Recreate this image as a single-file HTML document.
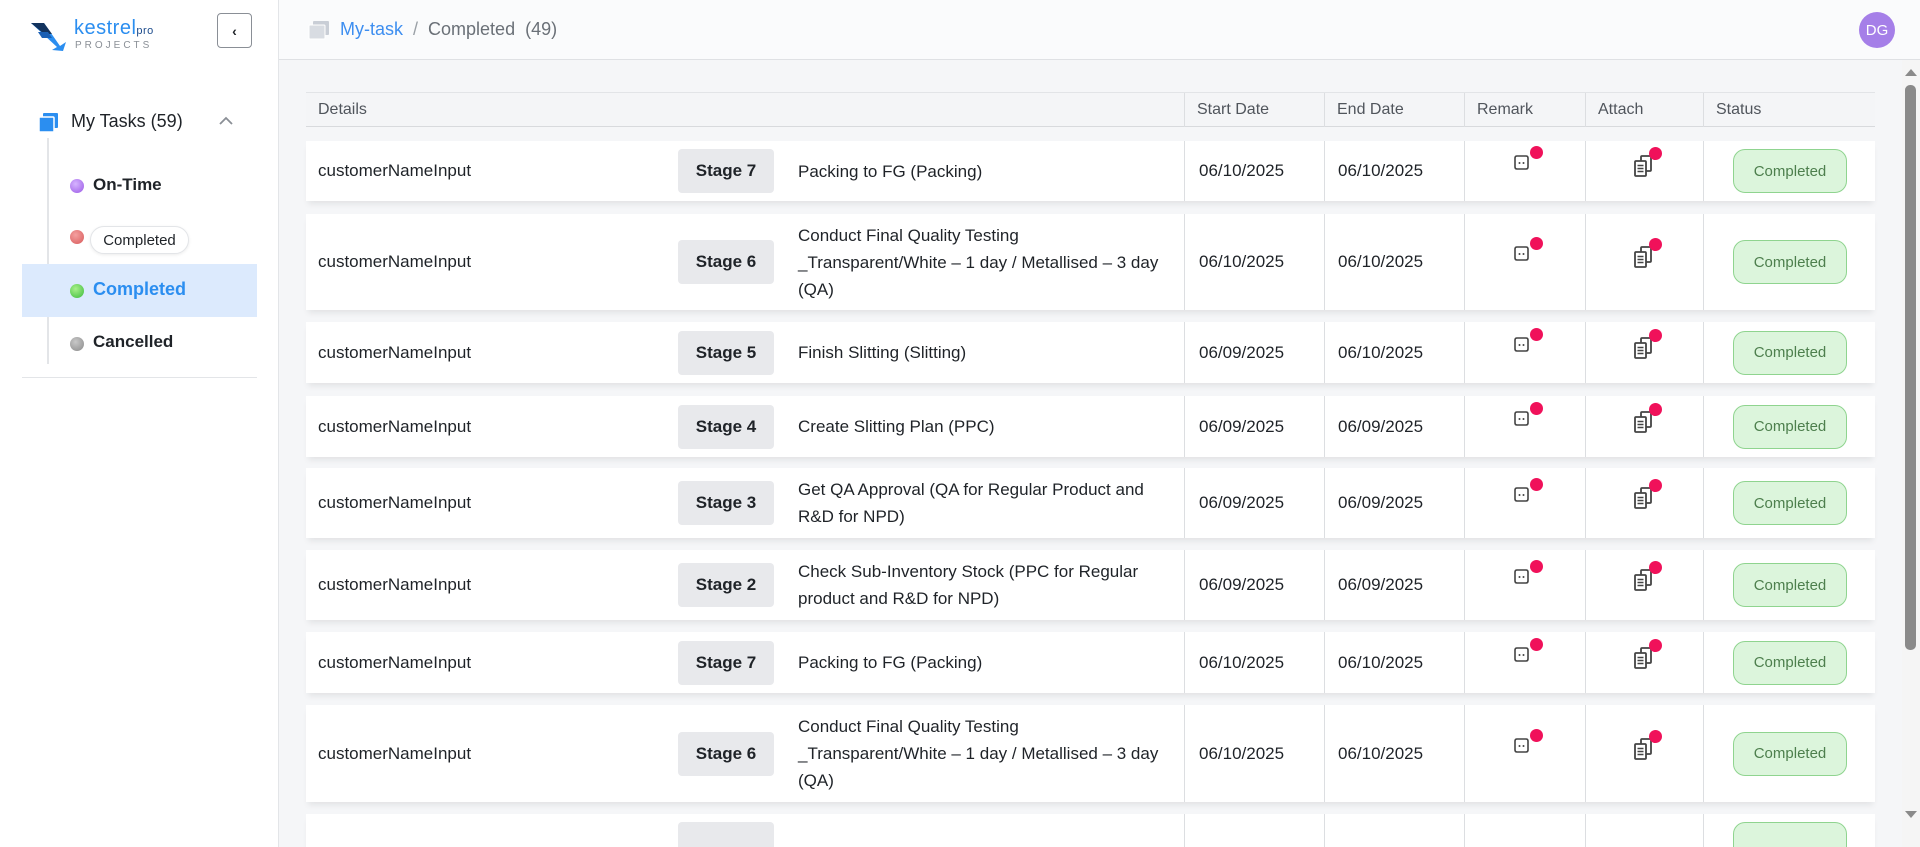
<!DOCTYPE html>
<html style="overflow:hidden;height:847px"><head><meta charset="utf-8"><style>
*{box-sizing:border-box;margin:0;padding:0}
body{width:1920px;height:847px;overflow:hidden;font-family:"Liberation Sans",sans-serif;background:#f5f6f8;position:relative;color:#1f2328}
.side{position:absolute;left:0;top:0;width:279px;height:847px;background:#fff;border-right:1px solid #e3e5e8}
.hdr{position:absolute;left:279px;top:0;right:0;height:60px;background:#fafbfc;border-bottom:1px solid #dfe1e4}
.abs{position:absolute}
.th{position:absolute;top:92px;height:35px;left:306px;width:1569px;background:#f4f5f7;border-top:1px solid #e2e4e7;border-bottom:1px solid #d8dadd;font-size:16px;color:#50555c}
.th div{position:absolute;top:0;height:34px;line-height:34px;padding-left:12px;border-left:1px solid #dcdee1}
.row{position:absolute;left:306px;width:1569px;background:#fff;box-shadow:0 5px 6px -2px rgba(0,0,0,.08);font-size:17px;overflow:hidden}
.row .c{position:absolute;top:0;bottom:0;display:flex;align-items:center}
.vl{position:absolute;top:0;bottom:0;width:1px;background:#dcdee1}
.stage{position:absolute;left:372px;width:96px;height:44px;background:#e8e9ec;border-radius:4px;font-weight:bold;display:flex;align-items:center;justify-content:center;top:50%;margin-top:-22px}
.pill{position:absolute;left:1427px;width:114px;height:44px;top:50%;margin-top:-22px;background:#dcf5dc;border:1px solid #8fd48f;border-radius:12px;color:#4d7f4d;font-size:15px;display:flex;align-items:center;justify-content:center}
.dot{position:absolute;width:13px;height:13px;border-radius:50%;background:#f0115a}
</style></head><body>
<div class="side">
  <svg class="abs" style="left:30px;top:20px" width="42" height="32" viewBox="0 0 42 32">
    <path d="M1 3 L14 3 L30 26 L36 22 L33 31 L22 30 L27 27 Z" fill="#2b8ef0"/>
    <path d="M1 3 L14 3 L22 14 L14 14 Z" fill="#13335e"/>
    <path d="M8 12 L18 12 L22 18 L12 18 Z" fill="#1a5fb4"/>
  </svg>
  <div class="abs" style="left:74px;top:17px;font-size:20px;color:#2b8ef0;letter-spacing:0.5px">kestrel<span style="font-size:11px;color:#1c4b8c">pro</span></div>
  <div class="abs" style="left:75px;top:40px;font-size:10px;color:#8a8f96;letter-spacing:3px">PROJECTS</div>
  <div class="abs" style="left:217px;top:13px;width:35px;height:35px;border:1px solid #8a8f96;border-radius:4px;display:flex;align-items:center;justify-content:center;font-weight:bold;font-size:14px">&#8249;</div>
  <svg class="abs" style="left:38px;top:112px" width="22" height="22" viewBox="0 0 22 22"><rect x="5" y="1" width="15" height="15" rx="1" fill="#2b8ef0"/><rect x="1" y="5" width="15" height="15" rx="1" fill="#2b8ef0" stroke="#fff" stroke-width="1.5"/></svg>
  <div class="abs" style="left:71px;top:111px;font-size:18px;color:#1f2328">My Tasks (59)</div>
  <svg class="abs" style="left:218px;top:116px" width="16" height="10" viewBox="0 0 16 10"><path d="M2 8 L8 2 L14 8" stroke="#8a8f96" stroke-width="1.8" fill="none"/></svg>
  <div class="abs" style="left:47px;top:138px;width:2px;height:226px;background:#e3e5e8"></div>
  <div class="abs" style="left:22px;top:264px;width:235px;height:53px;background:#dceafd"></div>
  <div class="abs" style="left:70px;top:179px;width:14px;height:14px;border-radius:50%;background:radial-gradient(circle at 40% 35%,#d6b4ff,#9b59e6)"></div>
  <div class="abs" style="left:93px;top:175px;font-size:17px;font-weight:bold">On-Time</div>
  <div class="abs" style="left:70px;top:230px;width:14px;height:14px;border-radius:50%;background:radial-gradient(circle at 40% 35%,#f4a0a0,#d85a5a)"></div>
  <div class="abs" style="left:90px;top:226px;height:28px;width:99px;border:1px solid #e3e5e8;border-radius:14px;background:#fff;font-size:15px;display:flex;align-items:center;justify-content:center;box-shadow:0 1px 3px rgba(0,0,0,.08)">Completed</div>
  <div class="abs" style="left:70px;top:284px;width:14px;height:14px;border-radius:50%;background:radial-gradient(circle at 40% 35%,#a8f08a,#3cbb3c)"></div>
  <div class="abs" style="left:93px;top:279px;font-size:18px;font-weight:bold;color:#2b8ef0">Completed</div>
  <div class="abs" style="left:70px;top:337px;width:14px;height:14px;border-radius:50%;background:radial-gradient(circle at 40% 35%,#c8c8c8,#8a8a8a)"></div>
  <div class="abs" style="left:93px;top:332px;font-size:17px;font-weight:bold">Cancelled</div>
  <div class="abs" style="left:22px;top:377px;width:235px;height:1px;background:#e3e5e8"></div>
</div>
<div class="hdr">
  <svg class="abs" style="left:29px;top:20px" width="22" height="20" viewBox="0 0 22 20"><rect x="5" y="1" width="16" height="14" rx="1" fill="#c9ced6"/><rect x="1" y="5" width="16" height="14" rx="1" fill="#d8dce2" stroke="#fff"/></svg>
  <div class="abs" style="left:61px;top:19px;font-size:18px;color:#3d8ef0">My-task <span style="color:#9aa0a6">&nbsp;/&nbsp;</span><span style="color:#6a7077"> Completed&nbsp; (49)</span></div>
  <div class="abs" style="left:1580px;top:12px;width:36px;height:36px;border-radius:50%;background:#a57fe8;color:#fff;font-size:15px;display:flex;align-items:center;justify-content:center">DG</div>
</div>
<div class="th">
  <div style="left:0;border-left:none">Details</div>
  <div style="left:878px;width:140px">Start Date</div>
  <div style="left:1018px;width:140px">End Date</div>
  <div style="left:1158px;width:121px">Remark</div>
  <div style="left:1279px;width:118px">Attach</div>
  <div style="left:1397px;width:172px">Status</div>
</div>
<div id="rows"></div>
<div class="abs" style="left:1902px;top:60px;width:18px;height:787px;background:#f5f5f5"></div>
<div class="abs" style="left:1905px;top:85px;width:11px;height:565px;background:#8a8a8a;border-radius:5px"></div>
<svg class="abs" style="left:1904px;top:67px" width="14" height="10"><path d="M1 9 L7 2 L13 9Z" fill="#8a8a8a"/></svg>
<svg class="abs" style="left:1904px;top:810px" width="14" height="10"><path d="M1 1 L7 8 L13 1Z" fill="#8a8a8a"/></svg>
<script>
var R=[[141,60,7,"Packing to FG (Packing)","06/10/2025","06/10/2025"],
[214,96,6,"Conduct Final Quality Testing<br>_Transparent/White – 1 day / Metallised – 3 day<br>(QA)","06/10/2025","06/10/2025"],
[322,61,5,"Finish Slitting (Slitting)","06/09/2025","06/10/2025"],
[396,61,4,"Create Slitting Plan (PPC)","06/09/2025","06/09/2025"],
[468,70,3,"Get QA Approval (QA for Regular Product and<br>R&amp;D for NPD)","06/09/2025","06/09/2025"],
[550,70,2,"Check Sub-Inventory Stock (PPC for Regular<br>product and R&amp;D for NPD)","06/09/2025","06/09/2025"],
[632,61,7,"Packing to FG (Packing)","06/10/2025","06/10/2025"],
[705,97,6,"Conduct Final Quality Testing<br>_Transparent/White – 1 day / Metallised – 3 day<br>(QA)","06/10/2025","06/10/2025"],
[814,33,0,"","",""]];
var bub='<svg width="20" height="18" viewBox="0 0 20 18"><path d="M4 2 H13 Q15 2 15 4 V13 Q15 15 13 15 H4 Q2 15 2 13 V4 Q2 2 4 2Z" fill="none" stroke="#444" stroke-width="1.6"/><circle cx="6.5" cy="9" r="1" fill="#444"/><circle cx="10.5" cy="9" r="1" fill="#444"/></svg>';
var att='<svg width="22" height="24" viewBox="0 0 22 24"><rect x="8" y="2" width="10" height="15" rx="1" fill="none" stroke="#444" stroke-width="1.8"/><rect x="2" y="7" width="11" height="15" rx="1" fill="#fff" stroke="#444" stroke-width="1.8"/><path d="M4.5 11.5h6M4.5 14.5h6M4.5 17.5h6" stroke="#444" stroke-width="1.5"/></svg>';
var h='';R.forEach(function(r){
 h+='<div class="row" style="top:'+r[0]+'px;height:'+r[1]+'px">';
 if(r[2]){
 h+='<div class="c" style="left:12px">customerNameInput</div><div class="stage">Stage '+r[2]+'</div>';
 h+='<div class="c" style="left:492px;line-height:27px">'+r[3]+'</div>';
 h+='<div class="c" style="left:893px">'+r[4]+'</div><div class="c" style="left:1032px">'+r[5]+'</div>';
 h+='<div class="abs" style="left:1207px;top:50%;margin-top:-17px">'+bub+'</div><div class="dot" style="left:1224px;top:50%;margin-top:-25px"></div>';
 h+='<div class="abs" style="left:1327px;top:50%;margin-top:-17px">'+att+'</div><div class="dot" style="left:1343px;top:50%;margin-top:-24px"></div>';
 h+='<div class="pill">Completed</div>';
 } else {h+='<div class="stage" style="top:0;margin-top:8px"></div><div class="pill" style="top:0;margin-top:8px"></div>';}
 [878,1018,1158,1279,1397].forEach(function(x){h+='<div class="vl" style="left:'+x+'px"></div>'});
 h+='</div>';});
document.getElementById('rows').innerHTML=h;
</script>
</body></html>
